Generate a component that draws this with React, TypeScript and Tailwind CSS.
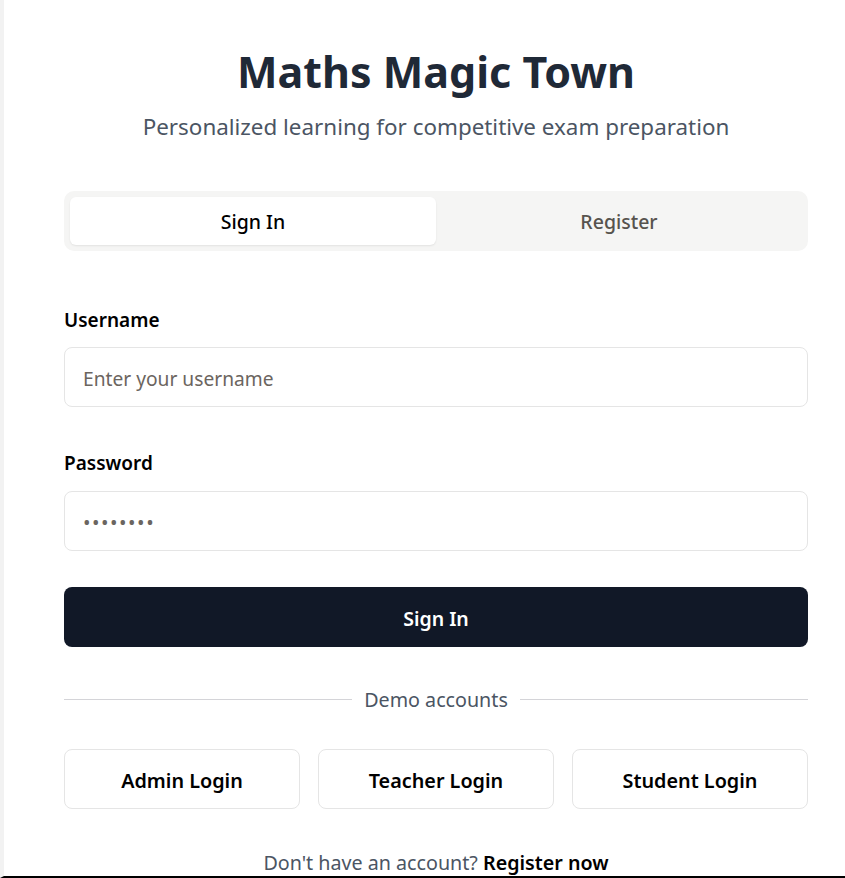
import React, { useState } from "react";

const demoAccounts = ["Admin Login", "Teacher Login", "Student Login"];

export default function App() {
  const [tab, setTab] = useState<"signin" | "register">("signin");

  return (
    <div className="h-[878px] w-full overflow-hidden bg-white border-l-4 border-[#f2f2f2] border-b-2 border-b-black font-['Noto_Sans',sans-serif]">
      <div className="ml-[60px] w-[744px] pt-[44px] flex flex-col">
        <h1 className="text-center text-[43px] leading-[56px] font-bold text-[#1f2937]">Maths Magic Town</h1>
        <p className="mt-[13px] text-center text-[22.4px] leading-[28px] text-[#4b5563]">
          Personalized learning for competitive exam preparation
        </p>

        <div className="mt-[50px] h-[60px] rounded-[10px] bg-[#f5f5f4] p-[6px] grid grid-cols-2 gap-0">
          <button
            onClick={() => setTab("signin")}
            className={`rounded-[6px] pt-[2px] text-[19.5px] font-medium ${tab === "signin" ? "bg-white text-black shadow-[0_1px_2px_rgba(0,0,0,0.08)]" : "text-[#57534e]"}`}
          >
            Sign In
          </button>
          <button
            onClick={() => setTab("register")}
            className={`rounded-[6px] pt-[2px] text-[19.5px] font-medium ${tab === "register" ? "bg-white text-black shadow-[0_1px_2px_rgba(0,0,0,0.08)]" : "text-[#57534e]"}`}
          >
            Register
          </button>
        </div>

        <label className="mt-[57px] text-[19px] leading-[25px] font-semibold text-black">Username</label>
        <input
          className="mt-[14px] h-[60px] rounded-[8px] border border-[#e5e5e5] px-[18px] pt-[2px] text-[19.2px] text-black placeholder:text-[#6b6560] outline-none"
          placeholder="Enter your username"
        />

        <label className="mt-[44px] text-[19px] leading-[25px] font-semibold text-black">Password</label>
        <input
          type="password"
          defaultValue="password"
          className="mt-[15px] h-[60px] rounded-[8px] border border-[#e5e5e5] px-[18px] pt-[2px] text-[20px] tracking-[1.5px] text-[#6b6560] outline-none"
        />

        <button className="mt-[36px] h-[60px] rounded-[8px] bg-[#111827] pt-[3px] text-white text-[19.5px] font-semibold">
          Sign In
        </button>

        <div className="mt-[41px] h-[22px] flex items-center gap-[12px]">
          <div className="flex-1 h-px bg-[#d4d4d8]" />
          <span className="text-[19.7px] leading-[22px] pt-[2px] text-[#4b5563]">Demo accounts</span>
          <div className="flex-1 h-px bg-[#d4d4d8]" />
        </div>

        <div className="mt-[39px] grid grid-cols-3 gap-[18px]">
          {demoAccounts.map((label) => (
            <button
              key={label}
              className="h-[60px] rounded-[8px] border border-[#e5e5e5] bg-white pt-[3px] text-[19.8px] font-semibold text-black"
            >
              {label}
            </button>
          ))}
        </div>

        <p className="mt-[41px] text-center text-[19.7px] leading-[26px] text-[#4b5563]">
          Don't have an account? <span className="font-semibold text-black">Register now</span>
        </p>
      </div>
    </div>
  );
}
